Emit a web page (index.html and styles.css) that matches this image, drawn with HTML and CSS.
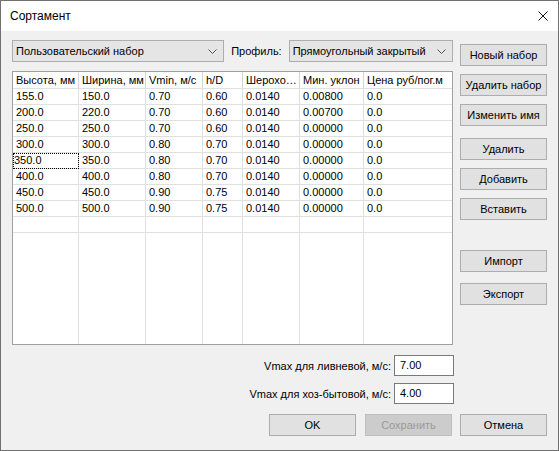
FILE: index.html
```html
<!DOCTYPE html>
<html lang="ru">
<head>
    <meta charset="UTF-8">
    <title>Сортамент</title>
    <link rel="stylesheet" href="styles.css">
</head>
<body>

    <div class="window">
        <!-- Title bar -->
        <div class="titlebar">
            <span class="title">Сортамент</span>
            <svg class="close" width="10" height="10" viewBox="0 0 10 10">
                <path d="M0.5 0.5 L9.5 9.5 M9.5 0.5 L0.5 9.5" stroke="#111" stroke-width="1" fill="none"/>
            </svg>
        </div>

        <div class="content">
            <div class="main">
                <div class="left-col">

                    <!-- Set and profile selectors -->
                    <div class="top-row">
                        <div class="combo combo-set">
                            <span>Пользовательский набор</span>
                            <svg width="9" height="5" viewBox="0 0 9 5"><path d="M0.5 0.5 L4.5 4.5 L8.5 0.5" stroke="#555" fill="none"/></svg>
                        </div>
                        <span class="label">Профиль:</span>
                        <div class="combo combo-profile">
                            <span>Прямоугольный закрытый</span>
                            <svg width="9" height="5" viewBox="0 0 9 5"><path d="M0.5 0.5 L4.5 4.5 L8.5 0.5" stroke="#555" fill="none"/></svg>
                        </div>
                    </div>

                    <!-- Sizes grid -->
                    <div class="grid">
                        <div class="grid-row grid-head">
                            <div class="cell">Высота, мм</div>
                            <div class="cell">Ширина, мм</div>
                            <div class="cell">Vmin, м/с</div>
                            <div class="cell">h/D</div>
                            <div class="cell">Шероховатость</div>
                            <div class="cell">Мин. уклон</div>
                            <div class="cell">Цена руб/пог.м</div>
                        </div>
                        <div id="gridRows"></div>
                        <div class="grid-row grid-filler">
                            <div class="cell"></div><div class="cell"></div><div class="cell"></div>
                            <div class="cell"></div><div class="cell"></div><div class="cell"></div>
                            <div class="cell"></div>
                        </div>
                    </div>

                    <!-- Max speeds -->
                    <div class="field-row">
                        <label>Vmax для ливневой, м/с:</label>
                        <div class="field">7.00</div>
                    </div>
                    <div class="field-row second">
                        <label>Vmax для хоз-бытовой, м/с:</label>
                        <div class="field">4.00</div>
                    </div>
                </div>

                <!-- Side buttons -->
                <div class="side-buttons">
                    <button class="btn">Новый набор</button>
                    <button class="btn">Удалить набор</button>
                    <button class="btn">Изменить имя</button>
                    <button class="btn group-start">Удалить</button>
                    <button class="btn">Добавить</button>
                    <button class="btn">Вставить</button>
                    <button class="btn import-btn">Импорт</button>
                    <button class="btn export-btn">Экспорт</button>
                </div>
            </div>

            <div class="footer">
                <button class="btn">OK</button>
                <button class="btn" disabled>Сохранить</button>
                <button class="btn cancel-btn">Отмена</button>
            </div>
        </div>
    </div>

    <script>
        // Rows of the sizes table
        const rows = [
            ['155.0', '150.0', '0.70', '0.60', '0.0140', '0.00800', '0.0'],
            ['200.0', '220.0', '0.70', '0.60', '0.0140', '0.00700', '0.0'],
            ['250.0', '250.0', '0.70', '0.60', '0.0140', '0.00000', '0.0'],
            ['300.0', '300.0', '0.80', '0.70', '0.0140', '0.00000', '0.0'],
            ['350.0', '350.0', '0.80', '0.70', '0.0140', '0.00000', '0.0'],
            ['400.0', '400.0', '0.80', '0.70', '0.0140', '0.00000', '0.0'],
            ['450.0', '450.0', '0.90', '0.75', '0.0140', '0.00000', '0.0'],
            ['500.0', '500.0', '0.90', '0.75', '0.0140', '0.00000', '0.0'],
            ['', '', '', '', '', '', '']
        ];

        const gridRows = document.getElementById('gridRows');

        rows.forEach((row, i) => {
            const rowDiv = document.createElement('div');
            rowDiv.classList.add('grid-row');
            row.forEach((value, j) => {
                const cell = document.createElement('div');
                cell.classList.add('cell');
                if (i === 4 && j === 0) {
                    cell.classList.add('focused');
                }
                cell.textContent = value;
                rowDiv.appendChild(cell);
            });
            gridRows.appendChild(rowDiv);
        });
    </script>

</body>
</html>
```

FILE: styles.css
```css
/* General Styles */
body {
    margin: 0;
    font-family: "Liberation Sans", Arial, sans-serif;
    font-size: 11px;
    color: #000;
    background: #fff;
}

.window {
    width: 559px;
    height: 451px;
    box-sizing: border-box;
    border: 1px solid #707070;
    background-color: #f0f0f0;
    display: flex;
    flex-direction: column;
}

/* Title bar */
.titlebar {
    height: 30px;
    background-color: #fff;
    display: flex;
    align-items: center;
    padding-left: 9px;
    padding-right: 10px;
    font-size: 12px;
}

.title {
    flex: 1;
}

.content {
    padding: 9px 11px 0 11px;
}

.main {
    display: flex;
    gap: 7px;
}

.left-col {
    width: 441px;
}

/* Selectors */
.top-row {
    display: flex;
    align-items: center;
    height: 22px;
    white-space: nowrap;
}

.combo {
    height: 22px;
    box-sizing: border-box;
    border: 1px solid #adadad;
    background-color: #e5e5e5;
    display: flex;
    align-items: center;
    justify-content: space-between;
    padding: 0 6px 0 3px;
}

.combo-set {
    width: 213px;
}

.combo-profile {
    width: 165px;
}

.label {
    margin: 0 7px;
}

/* Sizes grid */
.grid {
    margin-top: 9px;
    height: 274px;
    box-sizing: border-box;
    border: 1px solid #a0a0a0;
    background-color: #fff;
    display: flex;
    flex-direction: column;
}

.grid-row {
    display: grid;
    grid-template-columns: 66px 67px 57px 40px 57px 64px 1fr;
    height: 16px;
}

.cell {
    box-sizing: border-box;
    border-right: 1px solid #e0e0e0;
    border-bottom: 1px solid #e0e0e0;
    padding-left: 3px;
    line-height: 15px;
    white-space: nowrap;
    overflow: hidden;
    text-overflow: ellipsis;
}

.cell:last-child {
    border-right: none;
}

.grid-head {
    height: 17px;
}

.grid-head .cell {
    line-height: 16px;
    border-right-color: #d5d5d5;
}

.grid-head .cell:last-child {
    text-overflow: clip;
}

.cell.focused {
    outline: 1px dotted #000;
    outline-offset: -1px;
    padding-left: 1px;
}

.grid-filler {
    flex: 1;
}

.grid-filler .cell {
    border-bottom: none;
}

/* Speed fields */
.field-row {
    display: flex;
    justify-content: flex-end;
    align-items: center;
    gap: 3px;
    margin-top: 10px;
    margin-right: -1px;
}

.field-row.second {
    margin-top: 7px;
}

.field {
    width: 60px;
    height: 21px;
    box-sizing: border-box;
    border: 1px solid #7a7a7a;
    background-color: #fff;
    padding-left: 5px;
    line-height: 19px;
}

/* Buttons */
.btn {
    width: 87px;
    height: 22px;
    box-sizing: border-box;
    border: 1px solid #adadad;
    background-color: #e1e1e1;
    font-family: inherit;
    font-size: 11px;
    color: #000;
    padding: 0;
    white-space: nowrap;
}

.btn:disabled {
    background-color: #cccccc;
    border-color: #bfbfbf;
    color: #9a9a9a;
}

.side-buttons {
    display: flex;
    flex-direction: column;
    gap: 8px;
    padding-top: 4px;
}

.group-start {
    margin-top: 4px;
}

.import-btn {
    margin-top: 22px;
}

.export-btn {
    margin-top: 3px;
}

.footer {
    display: flex;
    justify-content: flex-end;
    gap: 9px;
    margin-top: 10px;
}

.cancel-btn {
    margin-left: -1px;
}
```
